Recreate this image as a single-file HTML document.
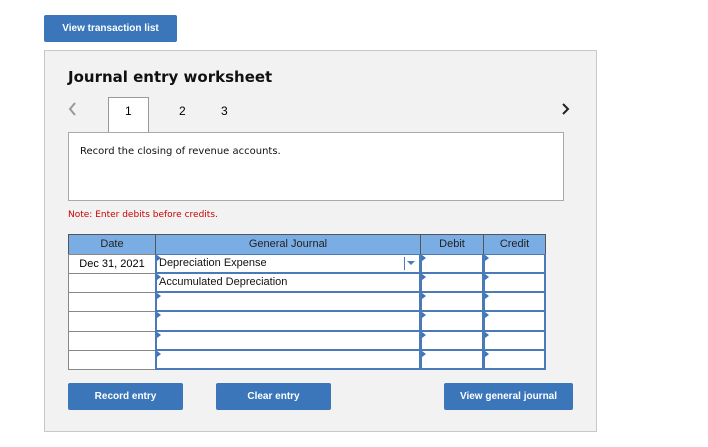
<!DOCTYPE html>
<html><head><style>
body{margin:0;width:708px;height:447px;background:#fff;font-family:"Liberation Sans",Arial,sans-serif;position:relative;overflow:hidden}
.abs{position:absolute}
.btn{position:absolute;background:#3a76b9;color:#fff;font-weight:bold;font-size:10px;text-align:center;border-radius:2px}
.panel{left:44px;top:50px;width:551px;height:380px;background:#f2f2f2;border:1px solid #c8c8c8}
.cell{position:absolute;box-sizing:border-box;font-size:11px}
.hd{background:#7aade3;border:1px solid #555;text-align:center;line-height:19px;color:#222}
.dc{background:#fff;border:1px solid #888;text-align:center;line-height:18px}
.in{background:#fff;border:2px solid #4a7ab8;border-top-width:1px;line-height:17px;padding-left:2px;color:#111}
.in:before{content:"";position:absolute;left:0;top:0;border-left:4px solid #3a76b9;border-top:3px solid transparent;border-bottom:3px solid transparent}
</style></head><body>
<div class="btn" style="left:44px;top:15px;width:133px;height:27px;line-height:28px">View transaction list</div>
<div class="abs panel"></div>
<div class="abs" style="left:68px;top:68px;font-family:'DejaVu Sans',sans-serif;font-weight:bold;font-size:15px;color:#111">Journal entry worksheet</div>
<svg class="abs" style="left:68px;top:101px" width="10" height="16"><path d="M7 2 L2 8 L7 14" stroke="#999" stroke-width="2" fill="none"/></svg>
<svg class="abs" style="left:561px;top:101px" width="10" height="16"><path d="M2 3 L7 8 L2 13" stroke="#222" stroke-width="2" fill="none"/></svg>
<div class="abs" style="left:108px;top:97px;width:41px;height:36px;background:#fff;border:1px solid #999;border-bottom:none;box-sizing:border-box"></div>
<div class="abs" style="left:125px;top:104px;font-size:12px">1</div>
<div class="abs" style="left:179px;top:104px;font-size:12px">2</div>
<div class="abs" style="left:221px;top:104px;font-size:12px">3</div>
<div class="abs" style="left:68px;top:132px;width:496px;height:69px;background:#fff;border:1px solid #aaa;box-sizing:border-box"></div>
<div class="abs" style="left:80px;top:146px;font-family:'DejaVu Sans',sans-serif;font-size:10px;color:#111">Record the closing of revenue accounts.</div>
<div class="abs" style="left:68px;top:210px;font-family:'DejaVu Sans',sans-serif;font-size:9px;color:#c00">Note: Enter debits before credits.</div>

<div class="cell hd" style="left:68px;top:234px;width:88px;height:21px">Date</div>
<div class="cell hd" style="left:155px;top:234px;width:266px;height:21px">General Journal</div>
<div class="cell hd" style="left:420px;top:234px;width:64px;height:21px">Debit</div>
<div class="cell hd" style="left:483px;top:234px;width:63px;height:21px">Credit</div>

<div class="cell dc" style="left:68px;top:254px;width:88px;height:20px">Dec 31, 2021</div>
<div class="cell dc" style="left:68px;top:273px;width:88px;height:20px"></div>
<div class="cell dc" style="left:68px;top:292px;width:88px;height:20px"></div>
<div class="cell dc" style="left:68px;top:311px;width:88px;height:21px"></div>
<div class="cell dc" style="left:68px;top:331px;width:88px;height:20px"></div>
<div class="cell dc" style="left:68px;top:350px;width:88px;height:20px"></div>

<div class="cell in" style="left:155px;top:254px;width:266px;height:20px">Depreciation Expense
 <div class="abs" style="left:247px;top:2px;width:1px;height:13px;background:#4a7ab8"></div>
 <div class="abs" style="left:250px;top:6px;border-left:4px solid transparent;border-right:4px solid transparent;border-top:4px solid #4a7ab8"></div></div>
<div class="cell in" style="left:155px;top:273px;width:266px;height:20px">Accumulated Depreciation</div>
<div class="cell in" style="left:155px;top:292px;width:266px;height:20px"></div>
<div class="cell in" style="left:155px;top:311px;width:266px;height:21px"></div>
<div class="cell in" style="left:155px;top:331px;width:266px;height:20px"></div>
<div class="cell in" style="left:155px;top:350px;width:266px;height:20px"></div>

<div class="cell in" style="left:420px;top:254px;width:64px;height:20px"></div>
<div class="cell in" style="left:420px;top:273px;width:64px;height:20px"></div>
<div class="cell in" style="left:420px;top:292px;width:64px;height:20px"></div>
<div class="cell in" style="left:420px;top:311px;width:64px;height:21px"></div>
<div class="cell in" style="left:420px;top:331px;width:64px;height:20px"></div>
<div class="cell in" style="left:420px;top:350px;width:64px;height:20px"></div>

<div class="cell in" style="left:483px;top:254px;width:63px;height:20px"></div>
<div class="cell in" style="left:483px;top:273px;width:63px;height:20px"></div>
<div class="cell in" style="left:483px;top:292px;width:63px;height:20px"></div>
<div class="cell in" style="left:483px;top:311px;width:63px;height:21px"></div>
<div class="cell in" style="left:483px;top:331px;width:63px;height:20px"></div>
<div class="cell in" style="left:483px;top:350px;width:63px;height:20px"></div>

<div class="btn" style="left:68px;top:383px;width:115px;height:27px;line-height:28px">Record entry</div>
<div class="btn" style="left:216px;top:383px;width:115px;height:27px;line-height:28px">Clear entry</div>
<div class="btn" style="left:444px;top:383px;width:129px;height:27px;line-height:28px">View general journal</div>
</body></html>
